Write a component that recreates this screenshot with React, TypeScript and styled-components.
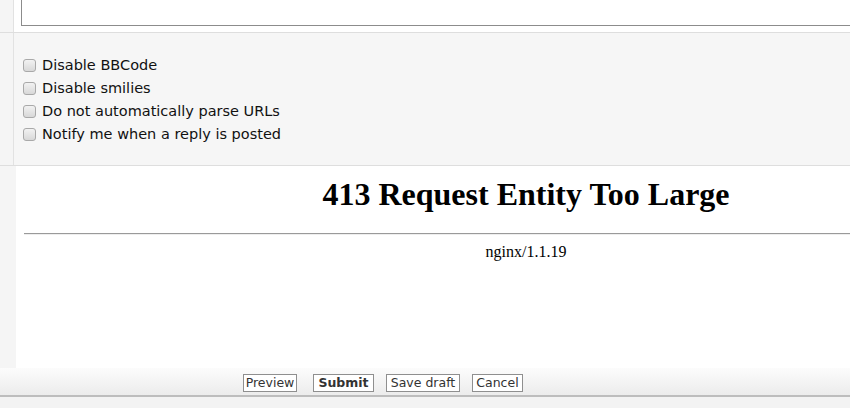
import React from "react";
import styled, { createGlobalStyle } from "styled-components";

const Global = createGlobalStyle`
  html, body { margin: 0; padding: 0; background: #f3f3f3; }
  body { width: 850px; height: 408px; overflow: hidden; }
`;

const Page = styled.div`
  width: 850px;
  height: 408px;
  overflow: hidden;
  display: flex;
  flex-direction: column;
  background: #f3f3f3;
`;

const Row = styled.div<{ $h: number; $bg: string; $side: number }>`
  display: grid;
  grid-template-columns: ${(p) => p.$side}px 1px 1fr;
  height: ${(p) => p.$h}px;
  background: ${(p) => p.$bg};
  flex: none;
`;

const Side = styled.div`
  background: #f5f5f5;
`;

const Divider = styled.div<{ $c?: string }>`
  background: ${(p) => p.$c || "#e2e2e2"};
`;

const HLine = styled.div`
  height: 1px;
  background: #dedede;
  flex: none;
`;

const EditorCell = styled.div`
  background: #fff;
  overflow: hidden;
  padding-left: 7px;
`;

const TextArea = styled.div`
  width: 900px;
  height: 25px;
  border: 1px solid #8c8c8c;
  border-top: none;
  background: #fff;
`;

const Options = styled.div`
  background: #f6f6f6;
  padding: 24px 0 0 9px;
  display: flex;
  flex-direction: column;
  gap: 7px;
`;

const Option = styled.label`
  display: flex;
  align-items: center;
  gap: 6px;
  height: 16px;
  font-family: "DejaVu Sans", Verdana, sans-serif;
  font-size: 14.5px;
  color: #111;
`;

const Box = styled.span`
  width: 11px;
  height: 11px;
  border: 1px solid #a9a9a9;
  border-radius: 3px;
  background: linear-gradient(#f2f2f2, #d8d8d8);
  flex: none;
`;

const FrameRow = styled.div`
  display: grid;
  grid-template-columns: 16px 1fr;
  height: 202px;
  flex: none;
`;

const FrameSide = styled.div`
  background: #f5f5f5;
`;

const Frame = styled.div`
  background: #fff;
  overflow: hidden;
`;

const FrameBody = styled.div`
  width: 1004px;
  margin: 8px;
  font-family: "Liberation Serif", "Times New Roman", serif;
  color: #000;
  text-align: center;
`;

const H1 = styled.h1`
  font-size: 32px;
  font-weight: bold;
  margin: 10px 0 0;
  line-height: 37px;
`;

const Rule = styled.hr`
  margin: 20px 0 0;
  border: none;
  border-top: 1px solid #9a9a9a;
  border-bottom: 1px solid #eee;
  height: 0;
`;

const Server = styled.div`
  font-size: 16px;
  margin-top: 8px;
  line-height: 18px;
`;

const ButtonBar = styled.div`
  height: 27px;
  flex: none;
  background: linear-gradient(#fcfcfc, #ececec);
  border-bottom: 2px solid #bdbdbd;
  display: flex;
  align-items: center;
  padding-left: 243px;
  box-sizing: content-box;
`;

const Btn = styled.button<{ $bold?: boolean; $ml: number; $w: number }>`
  margin: 2px 0 0 ${(p) => p.$ml}px;
  width: ${(p) => p.$w}px;
  height: 18px;
  padding: 0;
  border: 1px solid #8f8f8f;
  background: #fff;
  font-family: "DejaVu Sans", Verdana, sans-serif;
  font-size: 12.5px;
  font-weight: ${(p) => (p.$bold ? "bold" : "normal")};
  color: #333;
  line-height: 16px;
  text-align: center;
`;

const Bottom = styled.div`
  flex: 1;
  background: #f3f3f3;
`;

const options = [
  "Disable BBCode",
  "Disable smilies",
  "Do not automatically parse URLs",
  "Notify me when a reply is posted",
];

export default function App() {
  return (
    <Page>
      <Global />
      <Row $h={32} $bg="#fff" $side={13}>
        <Side />
        <Divider />
        <EditorCell>
          <TextArea />
        </EditorCell>
      </Row>
      <HLine />
      <Row $h={132} $bg="#f6f6f6" $side={13}>
        <Side />
        <Divider />
        <Options>
          {options.map((o) => (
            <Option key={o}>
              <Box />
              {o}
            </Option>
          ))}
        </Options>
      </Row>
      <HLine />
      <FrameRow>
        <FrameSide />
        <Frame>
          <FrameBody>
            <H1>413 Request Entity Too Large</H1>
            <Rule />
            <Server>nginx/1.1.19</Server>
          </FrameBody>
        </Frame>
      </FrameRow>
      <ButtonBar>
        <Btn $ml={0} $w={54}>Preview</Btn>
        <Btn $ml={16} $w={61} $bold>
          Submit
        </Btn>
        <Btn $ml={12} $w={74}>Save draft</Btn>
        <Btn $ml={12} $w={51}>Cancel</Btn>
      </ButtonBar>
      <Bottom />
    </Page>
  );
}
